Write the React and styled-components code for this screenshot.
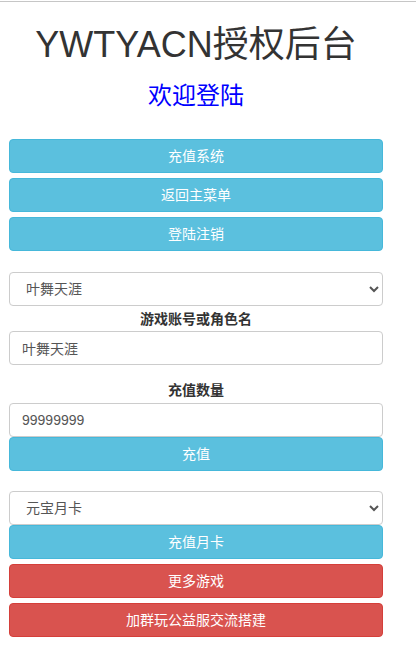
import React, { useState } from "react";
import styled, { createGlobalStyle } from "styled-components";

const GlobalStyle = createGlobalStyle`
  html, body {
    margin: 0;
    padding: 0;
    background: #fff;
  }
  body {
    font-family: "Liberation Sans", Arial, "Noto Sans CJK SC", sans-serif;
    font-size: 14px;
    color: #333;
  }
`;

const TopLine = styled.div`
  height: 1px;
  margin-top: 1px;
  background: #c6c6c6;
`;

const Page = styled.div`
  width: 374px;
  margin-left: 9px;
  padding-bottom: 20px;
`;

const Title = styled.h1`
  margin: 23px 0 0;
  font-size: 36px;
  font-weight: 400;
  line-height: 1.1;
  text-align: center;
  color: #333;
`;

const Welcome = styled.h2`
  margin: 18px 0 0;
  font-size: 24px;
  font-weight: 400;
  line-height: 1.1;
  text-align: center;
  color: #0000ff;
`;

const Btn = styled.button`
  display: block;
  width: 100%;
  height: 34px;
  margin-top: ${(p) => p.$gap ?? 5}px;
  padding: 6px 12px;
  border: 1px solid ${(p) => (p.$danger ? "#d43f3a" : "#46b8da")};
  border-radius: 4px;
  background: ${(p) => (p.$danger ? "#d9534f" : "#5bc0de")};
  color: #fff;
  font-family: inherit;
  font-size: 14px;
  line-height: 20px;
  text-align: center;
  cursor: pointer;
`;

const Select = styled.select`
  display: block;
  width: 100%;
  height: 34px;
  margin-top: ${(p) => p.$gap ?? 0}px;
  padding: 6px 12px;
  border: 1px solid #ccc;
  border-radius: 4px;
  background: #fff;
  color: #555;
  font-family: inherit;
  font-size: 14px;
`;

const Label = styled.div`
  margin-top: ${(p) => p.$gap ?? 0}px;
  font-weight: 700;
  line-height: 20px;
  text-align: center;
  color: #333;
`;

const Input = styled.input`
  display: block;
  box-sizing: border-box;
  width: 100%;
  height: 34px;
  margin-top: ${(p) => p.$gap ?? 0}px;
  padding: 6px 12px;
  border: 1px solid #ccc;
  border-radius: 4px;
  color: #555;
  font-family: inherit;
  font-size: 14px;
  outline: none;
`;

export default function App() {
  const [role, setRole] = useState("叶舞天涯");
  const [amount, setAmount] = useState("99999999");

  return (
    <>
      <GlobalStyle />
      <TopLine />
      <Page>
        <Title>YWTYACN授权后台</Title>
        <Welcome>欢迎登陆</Welcome>

        <Btn $gap={30}>充值系统</Btn>
        <Btn>返回主菜单</Btn>
        <Btn>登陆注销</Btn>

        <Select $gap={21} defaultValue="叶舞天涯">
          <option>叶舞天涯</option>
        </Select>
        <Label $gap={3}>游戏账号或角色名</Label>
        <Input $gap={2} value={role} onChange={(e) => setRole(e.target.value)} />

        <Label $gap={15}>充值数量</Label>
        <Input $gap={3} value={amount} onChange={(e) => setAmount(e.target.value)} />
        <Btn $gap={0}>充值</Btn>

        <Select $gap={20} defaultValue="元宝月卡">
          <option>元宝月卡</option>
        </Select>
        <Btn $gap={0}>充值月卡</Btn>
        <Btn $danger>更多游戏</Btn>
        <Btn $danger>加群玩公益服交流搭建</Btn>
      </Page>
    </>
  );
}
